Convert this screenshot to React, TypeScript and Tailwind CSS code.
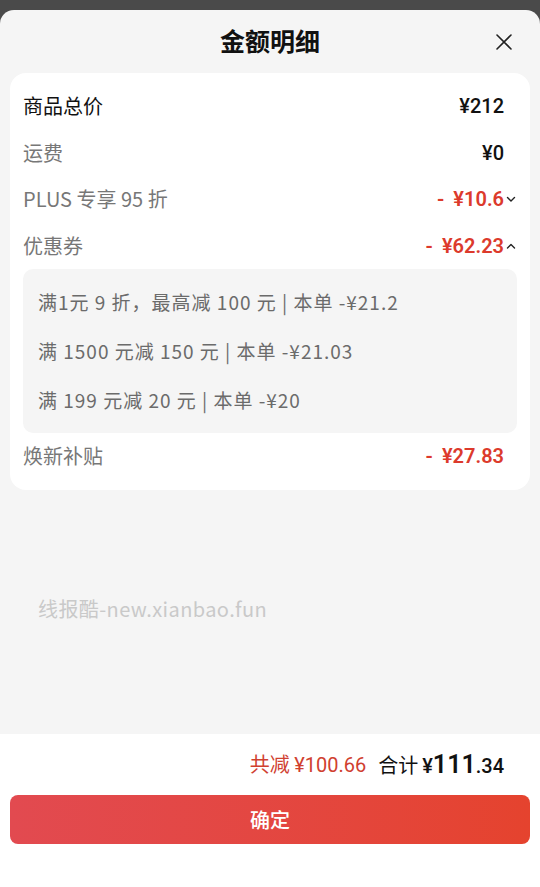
import React from 'react';

const cjk = { fontFamily: '"Noto Sans CJK SC", "Noto Sans", sans-serif' };
const num = { fontFamily: 'Roboto, "Noto Sans CJK SC", sans-serif' };

function Chevron({ up }: { up?: boolean }) {
  return (
    <svg width="12" height="12" viewBox="0 0 12 12" className="ml-[1px]">
      <path
        d={up ? 'M2.5 8 L6 4.5 L9.5 8' : 'M2.5 4.5 L6 8 L9.5 4.5'}
        fill="none"
        stroke="#222"
        strokeWidth="1.4"
        strokeLinecap="round"
        strokeLinejoin="round"
      />
    </svg>
  );
}

function Row({
  label,
  value,
  dark,
  red,
  chevron,
}: {
  label: string;
  value: string;
  dark?: boolean;
  red?: boolean;
  chevron?: 'up' | 'down';
}) {
  return (
    <div className="flex h-[46.5px] items-center justify-between px-[13px]">
      <span className={`text-[20px] ${dark ? 'text-[#111]' : 'text-[#777]'}`}>{label}</span>
      <span className={`flex items-center ${chevron ? '' : 'mr-[13px]'}`}>
        {red ? (
          <span style={num} className="text-[20px] font-semibold text-[#dc3a2c]">
            -<span className="ml-[9px]">{value}</span>
          </span>
        ) : (
          <span style={num} className="text-[20px] font-medium text-[#111]">
            {value}
          </span>
        )}
        {chevron && <Chevron up={chevron === 'up'} />}
      </span>
    </div>
  );
}

const coupons = ['满1元 9 折，最高减 100 元 | 本单 -¥21.2', '满 1500 元减 150 元 | 本单 -¥21.03', '满 199 元减 20 元 | 本单 -¥20'];

export default function App() {
  return (
    <div style={cjk} className="flex h-[887px] w-[540px] flex-col bg-[#4a4a4a] pt-[10px]">
      <div className="flex flex-1 flex-col overflow-hidden rounded-t-[14px] bg-[#f5f5f5]">
        {/* header */}
        <div className="relative flex h-[63px] items-center justify-center">
          <h1 className="-mt-[2px] text-[25px] font-bold text-[#111]">金额明细</h1>
          <svg width="18" height="18" viewBox="0 0 18 18" className="absolute right-[27px] top-[23px]">
            <path d="M2 2 L16 16 M16 2 L2 16" stroke="#222" strokeWidth="1.6" strokeLinecap="round" />
          </svg>
        </div>

        {/* detail card */}
        <div className="mx-[10px] rounded-[16px] bg-white pb-[10px] pt-[10px]">
          <Row label="商品总价" value="¥212" dark />
          <Row label="运费" value="¥0" />
          <Row label="PLUS 专享 95 折" value="¥10.6" red chevron="down" />
          <Row label="优惠券" value="¥62.23" red chevron="up" />
          <div className="mx-[13px] rounded-[10px] bg-[#f5f5f5] py-[8.5px] pl-[15px]">
            {coupons.map((c) => (
              <div key={c} className="flex h-[49px] items-center text-[19px] tracking-[1px] text-[#6b6b6b]">
                {c}
              </div>
            ))}
          </div>
          <Row label="焕新补贴" value="¥27.83" red />
        </div>

        <div className="flex flex-1 flex-col">
          <div className="mt-[104px] pl-[38px] text-[20px] tracking-[0.4px] text-[#c9c9c9]">线报酷-new.xianbao.fun</div>
        </div>

        {/* footer */}
        <div className="h-[153px] bg-white">
          <div className="flex h-[61px] items-center justify-end pr-[36px]">
            <span className="text-[20px] text-[#d0402f]">
              共减 <span style={num}>¥100.66</span>
            </span>
            <span className="ml-[12px] flex items-baseline text-[20px] text-[#111]">
              合计
              <span style={num} className="ml-[4px] font-medium">¥</span>
              <span style={num} className="text-[25px] font-semibold">111</span>
              <span style={num} className="font-medium">.34</span>
            </span>
          </div>
          <button className="mx-[10px] flex h-[49px] w-[520px] items-center justify-center rounded-[8px] bg-gradient-to-r from-[#e24a50] to-[#e5432e] text-[20px] font-medium text-white">
            确定
          </button>
        </div>
      </div>
    </div>
  );
}
